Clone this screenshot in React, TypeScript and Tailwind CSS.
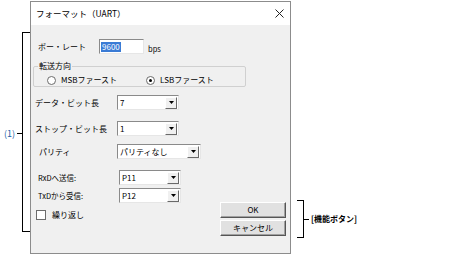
import { useState } from 'react';

const font = { fontFamily: '"Noto Sans CJK JP", "Noto Sans", sans-serif' };

function Select({ value, width }: { value: string; width: string }) {
    return (
        <div className={`${width} h-[15px] flex bg-white border-t border-l border-[#8a8a8a] border-r border-b border-r-[#e6e6e6] border-b-[#e6e6e6]`}>
            <div className="flex-1 pl-[2px] leading-[13px] text-[8px] text-black">{value}</div>
            <div className="w-[12px] h-[12px] mt-[0.5px] mr-[1px] bg-[#f0f0f0] border border-t-white border-l-white border-r-[#696969] border-b-[#696969] flex items-center justify-center">
                <svg width="5" height="3" viewBox="0 0 5 3"><path d="M0 0h5L2.5 3z" fill="#000" /></svg>
            </div>
        </div>
    );
}

export default function App() {
    const [lsb] = useState(true);
    return (
        <div className="w-[475px] h-[258px] bg-white flex text-black" style={font}>
            {/* (1) bracket */}
            <div className="w-[30px] flex items-center mt-[32px] h-[200px]">
                <span className="ml-[4px] w-[13px] text-[9px] text-[#1f5fa8] leading-none mt-[2px]">(1)</span>
                <div className="w-[5px] h-px bg-black mt-[2px]" />
                <div className="w-[8px] h-full border-y border-l border-black" />
            </div>

            {/* Dialog */}
            <div className="w-[261px] h-[253px] mt-[1px] border border-[#8c8c8c] flex flex-col bg-[#f0f0f0]">
                <div className="h-[23px] bg-white flex items-center justify-between pl-[5px] pr-[6px]">
                    <span className="text-[8.5px]">フォーマット（UART）</span>
                    <svg width="9" height="9" viewBox="0 0 9 9"><path d="M0.5 0.5l8 8M8.5 0.5l-8 8" stroke="#222" strokeWidth="1" /></svg>
                </div>

                <div className="flex-1 flex flex-col pl-[2px] text-[8px]">
                    {/* baud */}
                    <div className="flex items-end mt-[14px] pl-[5px]">
                        <span className="w-[61px] self-center">ボー・レート</span>
                        <div className="w-[45px] h-[15px] bg-white border-t border-l border-[#8a8a8a] border-r border-b border-r-[#e6e6e6] border-b-[#e6e6e6] flex items-center pl-[1px]">
                            <span className="bg-[#3a7bd5] text-white leading-[10px] px-px">9600</span>
                        </div>
                        <span className="ml-[4px] text-[7.5px]">bps</span>
                    </div>

                    {/* 転送方向 */}
                    <fieldset className="mt-[7px] w-[213px] border border-[#d0d0d0] rounded-[2px] pb-[1px]">
                        <legend className="ml-[4px] px-[1px] leading-[10px]">転送方向</legend>
                        <div className="flex items-center leading-[10px] mt-[4px]">
                            <span className="ml-[13px] w-[9px] h-[9px] rounded-full border border-[#6c6c6c] bg-white" />
                            <span className="ml-[5px] w-[85px]">MSBファースト</span>
                            <span className="w-[9px] h-[9px] rounded-full border border-[#6c6c6c] bg-white flex items-center justify-center">
                                {lsb && <span className="w-[3px] h-[3px] rounded-full bg-black" />}
                            </span>
                            <span className="ml-[5px]">LSBファースト</span>
                        </div>
                    </fieldset>

                    {/* data bit */}
                    <div className="flex items-center mt-[8px] pl-[2px]">
                        <span className="w-[82px]">データ・ビット長</span>
                        <Select value="7" width="w-[62px]" />
                    </div>
                    <div className="flex items-center mt-[11px] pl-[2px]">
                        <span className="w-[82px]">ストップ・ビット長</span>
                        <Select value="1" width="w-[62px]" />
                    </div>
                    <div className="flex items-center mt-[8px] pl-[6px]">
                        <span className="w-[78px]">パリティ</span>
                        <Select value="パリティなし" width="w-[84px]" />
                    </div>

                    <div className="flex items-center mt-[11px] pl-[5px]">
                        <span className="w-[81px] text-[7.5px]">RxDへ送信:</span>
                        <Select value="P11" width="w-[62px]" />
                    </div>
                    <div className="flex items-center mt-[3px] pl-[5px]">
                        <span className="w-[81px] text-[7.5px]">TxDから受信:</span>
                        <Select value="P12" width="w-[62px]" />
                    </div>

                    {/* bottom */}
                    <div className="flex justify-between items-start pr-[4px] -mt-[1px]">
                        <div className="flex items-center mt-[7px] pl-[3px]">
                            <span className="w-[10px] h-[10px] bg-white border border-[#6c6c6c]" />
                            <span className="ml-[6px]">繰り返し</span>
                        </div>
                        <div className="flex flex-col gap-[2px]">
                            <button className="w-[66px] h-[16px] bg-[#e1e1e1] border border-t-white border-l-white border-r-[#555] border-b-[#555] shadow-[inset_-1px_-1px_0_#a0a0a0] text-[8px] leading-none">OK</button>
                            <button className="w-[66px] h-[16px] bg-[#e1e1e1] border border-t-white border-l-white border-r-[#555] border-b-[#555] shadow-[inset_-1px_-1px_0_#a0a0a0] text-[8px] leading-none">キャンセル</button>
                        </div>
                    </div>
                </div>
            </div>

            {/* [機能ボタン] bracket */}
            <div className="flex items-center mt-[200px] h-[38px] ml-[6px]">
                <div className="w-[7px] h-full border-y border-r border-black" />
                <div className="w-[5px] h-px bg-black" />
                <span className="ml-[2px] text-[8px] font-bold leading-none">[機能ボタン]</span>
            </div>
        </div>
    );
}
